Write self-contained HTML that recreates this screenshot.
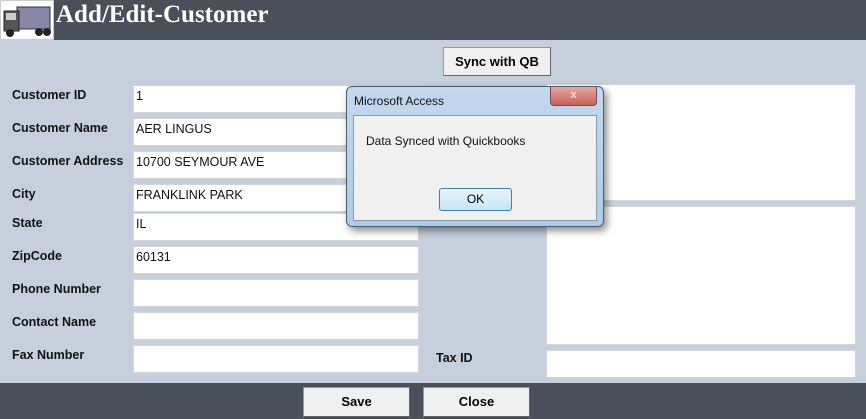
<!DOCTYPE html>
<html><head><style>
*{margin:0;padding:0;box-sizing:border-box}
body{width:866px;height:419px;background:#c5d0dc;position:relative;overflow:hidden;font-family:"Liberation Sans",sans-serif}
.hdr{position:absolute;left:0;top:0;width:866px;height:40px;background:#4a4f59}
.ttl{position:absolute;left:56px;top:1px;color:#fff;font:bold 25px "Liberation Serif",serif}
.logo{position:absolute;left:0;top:0;width:54px;height:40px;background:#fff;border:1px solid #ccc}
.ftr{position:absolute;left:0;top:383px;width:866px;height:36px;background:#4a4f59}
.lbl{position:absolute;left:12px;font-weight:bold;font-size:12.5px;color:#111}
.in{position:absolute;background:#fff;border:1px solid #d4d4d4;font-size:12.5px;padding:3px 2px;color:#111}
.btn{position:absolute;background:#f0f0f0;border:1px solid #999;border-right-color:#666;border-bottom-color:#666;font:bold 13px "Liberation Sans",sans-serif;text-align:center;line-height:27px;color:#000}
.dlg{position:absolute;left:346px;top:86px;width:258px;height:141px;border-radius:6px;background:linear-gradient(#c3d8ee,#b0cbe6);border:1px solid #4d5d70;box-shadow:3px 4px 8px rgba(0,0,0,.45)}
</style></head><body>
<div class="hdr"></div>
<div class="logo"><svg width="52" height="38"><rect x="16" y="6" width="33" height="22" fill="#8a86a8" stroke="#333"/><rect x="3" y="10" width="15" height="20" fill="#555" stroke="#222"/><rect x="5" y="12" width="10" height="7" fill="#ccc"/><circle cx="9" cy="32" r="4" fill="#222"/><circle cx="38" cy="31" r="4" fill="#222"/><circle cx="46" cy="31" r="4" fill="#222"/></svg></div>
<div class="ttl">Add/Edit-Customer</div>
<div class="btn" style="left:443px;top:47px;width:108px;height:29px">Sync with QB</div>

<div class="lbl" style="top:88px">Customer ID</div><div class="in" style="left:133px;top:85px;width:286px;height:28px">1</div>
<div class="lbl" style="top:121px">Customer Name</div><div class="in" style="left:133px;top:118px;width:286px;height:28px">AER LINGUS</div>
<div class="lbl" style="top:154px">Customer Address</div><div class="in" style="left:133px;top:151px;width:286px;height:28px">10700 SEYMOUR AVE</div>
<div class="lbl" style="top:187px">City</div><div class="in" style="left:133px;top:184px;width:286px;height:28px">FRANKLINK PARK</div>
<div class="lbl" style="top:216px">State</div><div class="in" style="left:133px;top:213px;width:286px;height:28px">IL</div>
<div class="lbl" style="top:249px">ZipCode</div><div class="in" style="left:133px;top:246px;width:286px;height:28px">60131</div>
<div class="lbl" style="top:282px">Phone Number</div><div class="in" style="left:133px;top:279px;width:286px;height:28px"></div>
<div class="lbl" style="top:315px">Contact Name</div><div class="in" style="left:133px;top:312px;width:286px;height:28px"></div>
<div class="lbl" style="top:348px">Fax Number</div><div class="in" style="left:133px;top:345px;width:286px;height:28px"></div>

<div class="in" style="left:546px;top:84px;width:310px;height:117px"></div>
<div class="in" style="left:546px;top:206px;width:310px;height:139px"></div>
<div class="lbl" style="left:436px;top:351px">Tax ID</div>
<div class="in" style="left:546px;top:350px;width:310px;height:28px"></div>

<div class="ftr"></div>
<div class="btn" style="left:303px;top:387px;width:107px;height:30px">Save</div>
<div class="btn" style="left:423px;top:387px;width:107px;height:30px">Close</div>

<div class="dlg">
<div style="position:absolute;left:7px;top:7px;font-size:12px;color:#111">Microsoft Access</div>
<div style="position:absolute;left:203px;top:0;width:47px;height:19px;border:1px solid #7a4a4a;border-top:none;border-radius:0 0 4px 4px;background:linear-gradient(#e6a8a0,#c6625a);color:#f4dcdc;text-align:center;font:bold 11px sans-serif;line-height:17px">x</div>
<div style="position:absolute;left:6px;top:28px;width:244px;height:106px;background:#f0f0f0;border:1px solid #8a9aae">
<div style="position:absolute;left:12px;top:18px;font-size:12px;color:#111">Data Synced with Quickbooks</div>
<div style="position:absolute;left:85px;top:72px;width:73px;height:23px;border:1px solid #3c7fb1;border-radius:3px;background:linear-gradient(#eaf6fd,#c4e5f6);text-align:center;font-size:12px;line-height:21px">OK</div>
</div></div>
</body></html>
